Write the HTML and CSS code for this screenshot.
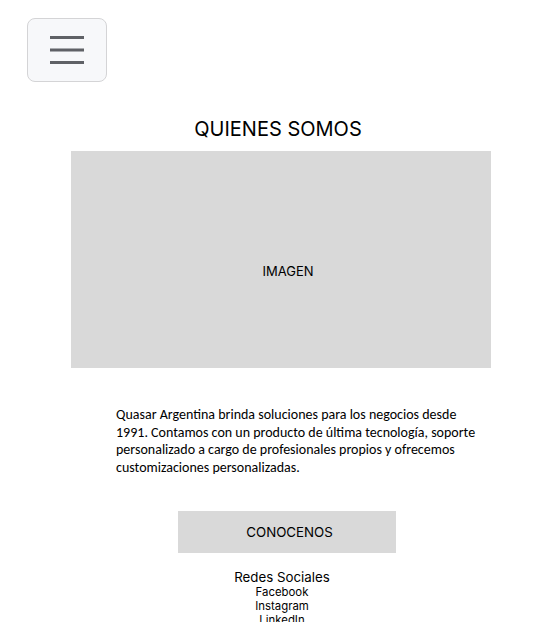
FILE: index.html
```html
<!DOCTYPE html>
<html lang="es">
<head>
<meta charset="utf-8">
<link rel="stylesheet" href="styles.css">
</head>
<body>
<header class="top">
  <button class="menu" aria-label="Menú">
    <svg width="34" height="29" viewBox="0 0 34 29">
      <rect x="0" y="0" width="34" height="3" fill="#5f6166"/>
      <rect x="0" y="12.5" width="34" height="3" fill="#5f6166"/>
      <rect x="0" y="25" width="34" height="3" fill="#5f6166"/>
    </svg>
  </button>
</header>
<main class="content">
  <h1 class="title">QUIENES SOMOS</h1>
  <div class="image">IMAGEN</div>
  <p class="about">Quasar Argentina brinda soluciones para los negocios desde 1991. Contamos con un producto de última tecnología, soporte personalizado a cargo de profesionales propios y ofrecemos customizaciones personalizadas.</p>
  <div class="cta-wrap"><button class="cta">CONOCENOS</button></div>
  <footer class="social">
    <div class="social-title">Redes Sociales</div>
    <div class="social-link">Facebook</div>
    <div class="social-link">Instagram</div>
    <div class="social-link">LinkedIn</div>
  </footer>
</main>
</body>
</html>
```
FILE: styles.css
```css
html, body { margin: 0; padding: 0; background: #fff; }
body { font-family: Inter, "Noto Sans", sans-serif; color: #000; overflow: hidden; height: 622px; }
.top { padding: 18px 0 0 27px; }
.menu {
  width: 80px; height: 64px; box-sizing: border-box;
  border: 1.5px solid #d4d4d6; border-radius: 8px; background: #f7f8fa;
  display: flex; align-items: center; justify-content: center; padding: 0;
}
.content { width: 420px; margin-left: 71px; display: flex; flex-direction: column; }
.title { font-weight: 400; font-size: 20px; line-height: 24px; margin: 35px 0 10px 0; text-align: center; padding-right: 6px; }
.image { height: 217px; background: #d9d9d9; display: flex; align-items: center; justify-content: center; font-size: 13px; padding: 23px 0 0 14px; box-sizing: border-box; }
.about { font-family: Carlito, "Open Sans", sans-serif; font-size: 14px; line-height: 17.5px; margin: 38px 0 0 45px; width: 368px; }
.cta-wrap { margin-top: 35px; padding-left: 107px; }
.cta { width: 218px; height: 42px; border: none; background: #d9d9d9; font-family: Inter, sans-serif; font-size: 13.3px; color: #000; padding: 0 0 0 5px; }
.social { margin-top: 17px; text-align: center; padding-left: 2px; }
.social-title { font-size: 13.3px; line-height: 15px; }
.social-link { font-size: 11.4px; line-height: 14px; }
```
